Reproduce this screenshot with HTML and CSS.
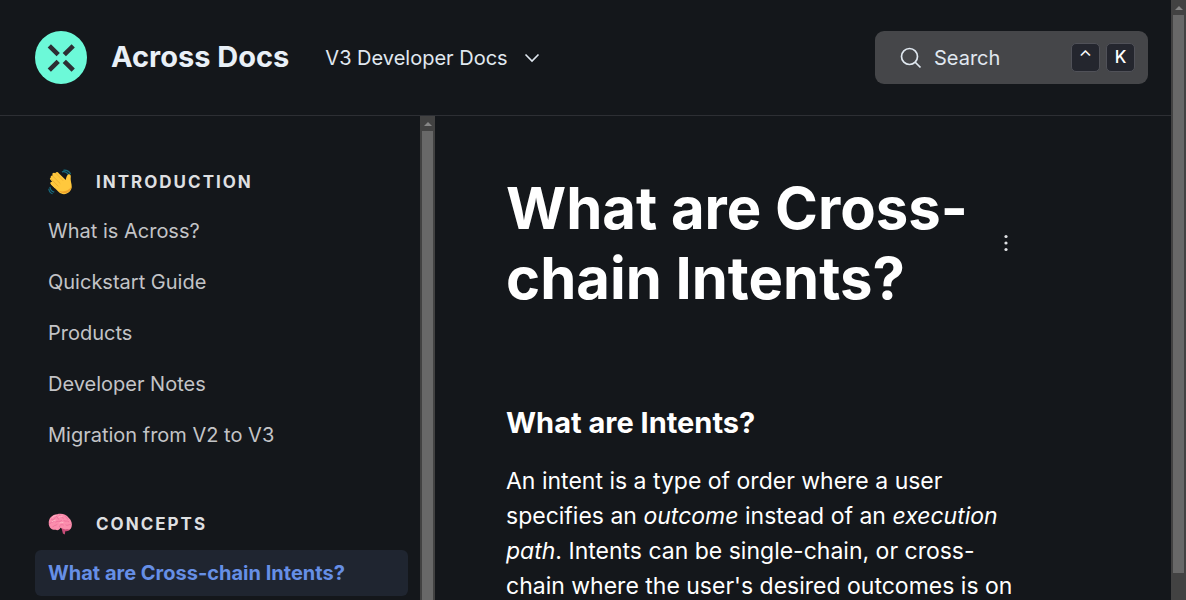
FILE: index.html
```html
<!DOCTYPE html>
<html lang="en">
<head>
<meta charset="utf-8">
<meta name="viewport" content="width=device-width, initial-scale=1">
<title>What are Cross-chain Intents? | Across Docs</title>
<link rel="stylesheet" href="styles.css">
</head>
<body class="shell">
  <div class="page">
    <header class="header">
      <a class="brand" href="#">
        <svg class="logo" viewBox="0 0 52 53" aria-hidden="true">
          <ellipse cx="26" cy="26.500" rx="26" ry="26.500" fill="#6cf9d8"/>
          <path d="M14.300 14.800l8.900 8.900M38.200 14.800l-8.900 8.900M14.300 39.200l8.900-8.900M38.200 39.200l-8.900-8.900" stroke="#2d2e33" stroke-width="4.600" fill="none"/>
        </svg>
        <span class="brand-name">Across Docs</span>
      </a>
      <button class="space-switch" type="button">
        V3 Developer Docs
        <svg class="chevron" viewBox="0 0 16 16" aria-hidden="true"><path d="M1.500 4.500l6.500 6.500 6.500-6.500"/></svg>
      </button>
      <button class="search" type="button">
        <svg class="search-icon" viewBox="0 0 22 22" aria-hidden="true"><circle cx="9.500" cy="9.500" r="8"/><path d="M15 15l5.500 5.500"/></svg>
        <span class="search-label">Search</span>
        <kbd class="key caret">⌃</kbd>
        <kbd class="key">K</kbd>
      </button>
    </header>
    <div class="body">
      <nav class="sidebar" aria-label="Table of contents">
        <section class="group">
          <h2 class="group-title">
            <svg class="emoji" viewBox="0 0 26 26" aria-hidden="true">
              <path d="M14.500 2.500q4-1.500 7 3M16 .8q5-.5 7.500 4M2 18q.5 4.500 4.500 5.500M.8 20q.7 4.300 4 5.200" fill="none" stroke="#176b80" stroke-width="1.300"/>
              <path d="M3 8.500c-.8-1.500 1-2.900 2.300-1.700L4.700 5.600c-.8-1.700 1.500-3 2.700-1.600L8 3.500c.8-1.400 2.400-.9 3.200.3l7.300 7.200c.3-2 .8-5 2.500-5.900 1.700-.8 2.900.5 2.700 2.400-.4 2.700.2 5 .8 8 .8 3.700-.7 6.700-3.500 8.800-3.200 2.200-7.300 1.600-9.800-.9l-8-7.900c-1.500-1.600.2-3.500 1.900-2.500L2.500 10.500C1.500 9 2 8.500 3 8.500z" fill="#ffc83d"/>
              <path d="M2.500 10.500l2.600 2.500c-1.700-1-3.400.9-1.900 2.500l4 4 6-7-7-7z" fill="#ffc83d"/>
              <path d="M4.800 6.700l7.700 7.700M8 3.800l7.500 7.700M3 9.600l7.500 7.700" fill="none" stroke="#e8a52c" stroke-width=".7" stroke-linecap="round"/>
              <path d="M24.300 18c.2 3.800-3.700 7-8.100 6.700-2.500-.2-4-1.300-5-2.500 5 1.500 10 .4 13.100-4.200z" fill="#f0a42b"/>
            </svg>
            Introduction
          </h2>
          <a class="nav-link" href="#">What is Across?</a>
          <a class="nav-link" href="#">Quickstart Guide</a>
          <a class="nav-link" href="#">Products</a>
          <a class="nav-link" href="#">Developer Notes</a>
          <a class="nav-link" href="#">Migration from V2 to V3</a>
        </section>
        <section class="group">
          <h2 class="group-title">
            <svg class="emoji" viewBox="0 0 26 26" aria-hidden="true">
              <path d="M13 15l10-1 1 3c-1 3-4 4-6 3.500l-.5 3.500-2-1-1-4z" fill="#c74d78"/>
              <path d="M.8 12.500C.3 7 4.500 3 9.500 2.800c5-1.200 9.500.2 12 3.700 3 2.500 4 6.500 3 9.500-.5 2.200-2.500 3-4.500 2.500-2.500.5-5-.5-7-1.500-1 2-3 3-5 2-3.500.5-7-1.500-7.200-6.500z" fill="#fb8ead"/>
              <path d="M1.500 13c1-2.500 4-1 5-3M3.500 8c1.500 1.500 3 .2 4-1.500M8 4c0 2 2.500 1.500 3 4M12 3.500c2 1 1.500 3 4 3.500M8 11c2-2 4 .5 6-1.500M5 16c1-2 3-1 4.500-2.500M12 16c-.5-2 2-3 4-2M16.500 9.500c2 1.500 3-.5 5 1M18 4.500c0 2 2 1.500 2.500 3.500M18.500 14c2 1.500 3-1 5-.5" fill="none" stroke="#ec6c99" stroke-width=".8" stroke-linecap="round"/>
              <path d="M4 6.500q2-2.500 5-2.500M11 6q2-1.500 4-1M4 11q2-2 4-2M12 12q2-1 4-.5" fill="none" stroke="#ffb5c6" stroke-width="1"/>
            </svg>
            Concepts
          </h2>
          <a class="nav-link active" href="#" aria-current="page">What are Cross-chain Intents?</a>
        </section>
      </nav>
      <div class="track" aria-hidden="true"><span class="arrow"></span><span class="thumb"></span></div>
      <main class="main">
        <div class="title-row">
          <h1 class="title">What are Cross-chain Intents?</h1>
          <button class="more" type="button" aria-label="More">
            <svg class="dots" viewBox="0 0 4 18" aria-hidden="true"><circle cx="2" cy="2.500" r="1.600"/><circle cx="2" cy="9" r="1.600"/><circle cx="2" cy="15.500" r="1.600"/></svg>
          </button>
        </div>
        <h2 class="subtitle">What are Intents?</h2>
        <p class="text">An intent is a type of order where a user specifies an <em>outcome</em> instead of an <em>execution path</em>. Intents can be single-chain, or cross-chain where the user's desired outcomes is on</p>
      </main>
    </div>
  </div>
  <div class="track" aria-hidden="true"><span class="arrow"></span><span class="thumb page-thumb"></span></div>
</body>
</html>
```

FILE: styles.css
```css
* {
  box-sizing: border-box;
}

.shell {
  display: grid;
  grid-template-columns: minmax(0, 1fr) 15px;
  height: 100vh;
  margin: 0;
  overflow: hidden;
  background: #14171b;
  color: #fff;
  font-family: Inter, "Liberation Sans", sans-serif;
}

.page {
  display: flex;
  flex-direction: column;
  min-height: 0;
}

.header {
  display: flex;
  flex: none;
  align-items: center;
  padding: 31px 23px 31px 35px;
  border-bottom: 1px solid #2d2f34;
}

.brand {
  display: flex;
  align-items: center;
  gap: 24px;
  color: #e9f0f7;
  text-decoration: none;
}

.logo {
  width: 52px;
  height: 53px;
}

.brand-name {
  font-size: 29px;
  font-weight: 700;
  line-height: 36px;
  padding-bottom: 2px;
}

.space-switch {
  display: flex;
  align-items: center;
  gap: 16px;
  margin-left: 36px;
  padding: 0;
  border: 0;
  background: none;
  color: #e0e8f0;
  font: 400 20px/28px Inter, sans-serif;
}

.chevron {
  width: 16px;
  height: 16px;
  fill: none;
  stroke: currentColor;
  stroke-width: 1.6;
}

.search {
  display: flex;
  align-items: center;
  width: 273px;
  height: 53px;
  margin-left: auto;
  padding: 0 13px 0 25px;
  gap: 6px;
  border: 0;
  border-radius: 9px;
  background: #454649;
  color: #e0e8f0;
  font: 400 20px/28px Inter, sans-serif;
}

.search-icon {
  width: 22px;
  height: 22px;
  fill: none;
  stroke: currentColor;
  stroke-width: 1.7;
}

.search-label {
  flex: 1;
  padding-left: 6px;
  text-align: left;
}

.key {
  width: 29px;
  height: 29px;
  border: 1px solid #505158;
  border-radius: 5px;
  background: #24262e;
  color: #fff;
  font: 500 17px/27px Inter, sans-serif;
  text-align: center;
}

.caret {
  font-weight: 400;
}

.body {
  display: grid;
  flex: 1;
  grid-template-columns: 420px 15px minmax(0, 1fr);
  min-height: 0;
}

.sidebar {
  min-height: 0;
  overflow: hidden;
  padding: 46px 12px 0 35px;
}

.group {
  display: flex;
  flex-direction: column;
  gap: 5px;
  margin-bottom: 46px;
}

.group-title {
  display: flex;
  align-items: center;
  gap: 23px;
  margin: 0 0 1px;
  padding-left: 13px;
  color: #dedfe1;
  font-size: 17px;
  font-weight: 700;
  line-height: 40px;
  letter-spacing: 2px;
  text-transform: uppercase;
}

.emoji {
  width: 25px;
  height: 26px;
}

.nav-link {
  padding: 9px 13px;
  border-radius: 6px;
  color: #c3c4c7;
  font-size: 20px;
  line-height: 28px;
  text-decoration: none;
}

.active {
  background: #1f2530;
  color: #668fe6;
  font-weight: 700;
}

.track {
  display: flex;
  flex-direction: column;
  align-items: center;
  min-height: 0;
  background: #424242;
}

.arrow {
  width: 0;
  margin: 6px 0 5px;
  border: 4px solid transparent;
  border-top: 0;
  border-bottom-color: #868686;
}

.thumb {
  flex: 1;
  width: 11px;
  background: #686868;
}

.page-thumb {
  flex: none;
  height: 93%;
}

.main {
  min-height: 0;
  overflow: hidden;
  padding: 57px 156px 0 71px;
}

.title-row {
  display: flex;
  align-items: center;
  justify-content: space-between;
  margin-bottom: 92px;
}

.title {
  flex: 1;
  margin: 0;
  font-size: 58px;
  font-weight: 700;
  line-height: 70px;
}

.more {
  padding: 0 7px;
  border: 0;
  background: none;
  color: #dfe1e4;
}

.dots {
  display: block;
  width: 4px;
  height: 18px;
  fill: currentColor;
}

.subtitle {
  margin: 0 0 23px;
  font-size: 29px;
  font-weight: 700;
  line-height: 36px;
}

.text {
  margin: 0;
  font-size: 23px;
  line-height: 35px;
}
```
